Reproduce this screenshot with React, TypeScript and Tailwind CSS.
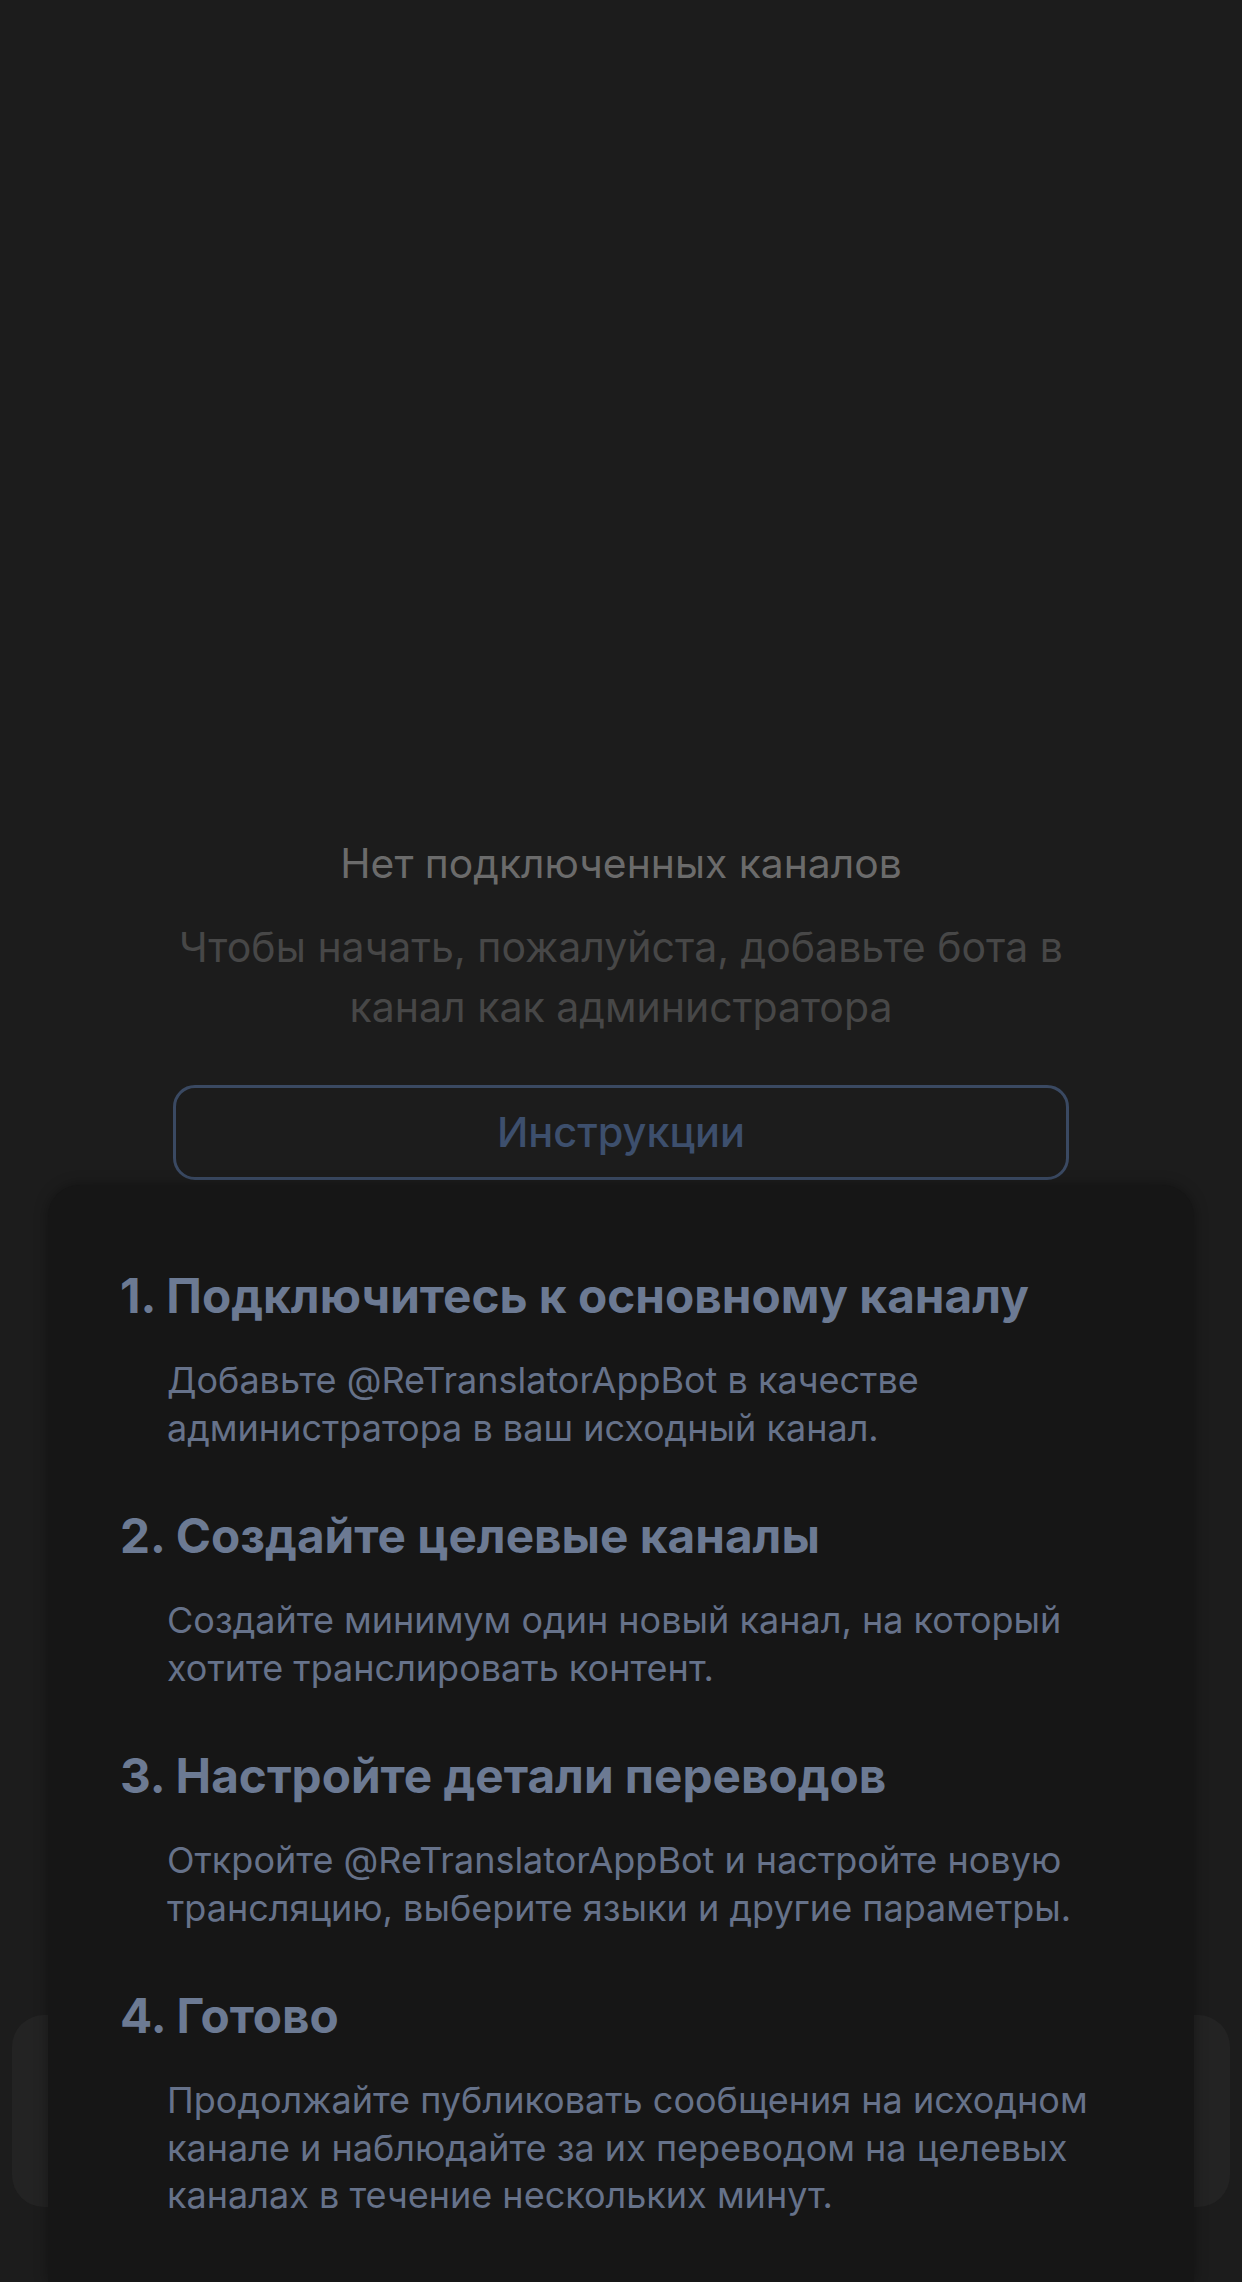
import React from "react";

type Step = { title: string; body: string[] };

const steps: Step[] = [
  {
    title: "1. Подключитесь к основному каналу",
    body: ["Добавьте @ReTranslatorAppBot в качестве", "администратора в ваш исходный канал."],
  },
  {
    title: "2. Создайте целевые каналы",
    body: ["Создайте минимум один новый канал, на который", "хотите транслировать контент."],
  },
  {
    title: "3. Настройте детали переводов",
    body: ["Откройте @ReTranslatorAppBot и настройте новую", "трансляцию, выберите языки и другие параметры."],
  },
  {
    title: "4. Готово",
    body: [
      "Продолжайте публиковать сообщения на исходном",
      "канале и наблюдайте за их переводом на целевых",
      "каналах в течение нескольких минут.",
    ],
  },
];

export default function App() {
  return (
    <div className="relative h-[2282px] w-full overflow-hidden bg-[#1c1c1c] font-['Inter','Noto_Sans',sans-serif]">
      {/* page behind the sheet */}
      <div className="flex h-full flex-col">
        <div className="flex flex-col items-center pt-[839px]">
          <h2 className="text-[40.8px] leading-[48px] font-normal text-[#6b6b6b]">Нет подключенных каналов</h2>
          <p className="mt-[30px] text-center text-[41px] leading-[60px] text-[#474747]">
            Чтобы начать, пожалуйста, добавьте бота в
            <br />
            канал как администратора
          </p>
          <button className="mt-[48px] flex h-[95px] w-[896px] items-center justify-center rounded-[22px] border-[3px] border-[#3a4962] text-[41.5px] font-medium text-[#3d4f6d]">
            Инструкции
          </button>
        </div>
        <div className="flex-1" />
        <div className="mx-[12px] mb-[75px] h-[192px] rounded-[32px] bg-[#232323]" />
      </div>

      {/* instructions sheet */}
      <div className="absolute top-[1185px] right-[48px] bottom-0 left-[48px] rounded-t-[32px] bg-[#161616] pt-[83px] pl-[72px] shadow-[0_0_14px_rgba(0,0,0,0.35)]">
        <div className="flex flex-col gap-[56px]">
          {steps.map((s) => (
            <div key={s.title} className="flex flex-col gap-[32px]">
              <h3 className="text-[47.7px] leading-[57px] font-bold text-[#6c7a93]">{s.title}</h3>
              <p className="pl-[47px] text-[36px] leading-[47.5px] text-[#66728a]">
                {s.body.map((line, i) => (
                  <React.Fragment key={i}>
                    {line}
                    {i < s.body.length - 1 && <br />}
                  </React.Fragment>
                ))}
              </p>
            </div>
          ))}
        </div>
      </div>
    </div>
  );
}
